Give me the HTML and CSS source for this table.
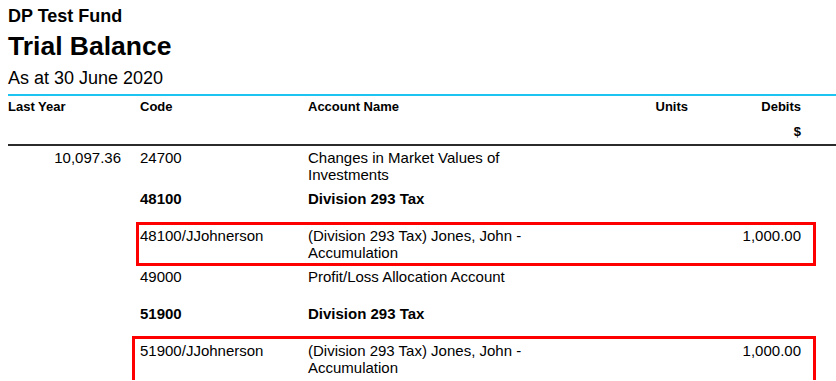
FILE: index.html
```html
<!DOCTYPE html>
<html lang="en">
<head>
    <meta charset="UTF-8">
    <meta name="viewport" content="width=device-width, initial-scale=1.0">
    <title>Trial Balance</title>
    <link rel="stylesheet" href="styles.css">
</head>
<body>
    <div class="report">
        <div class="fund">DP Test Fund</div>
        <div class="title">Trial Balance</div>
        <div class="subtitle">As at 30 June 2020</div>

        <div class="head">
            <div class="row head-row">
                <div>Last Year</div>
                <div>Code</div>
                <div>Account Name</div>
                <div class="num">Units</div>
                <div class="num">Debits</div>
            </div>
            <div class="row head-row currency">
                <div></div>
                <div></div>
                <div></div>
                <div></div>
                <div class="num">$</div>
            </div>
        </div>

        <div class="body">
            <div class="row line">
                <div class="num last-year">10,097.36</div>
                <div>24700</div>
                <div class="name">Changes in Market Values of Investments</div>
                <div></div>
                <div></div>
            </div>
            <div class="row line total">
                <div></div>
                <div>48100</div>
                <div class="name">Division 293 Tax</div>
                <div></div>
                <div></div>
            </div>
            <div class="row line">
                <div></div>
                <div>48100/JJohnerson</div>
                <div class="name">(Division 293 Tax) Jones, John - Accumulation</div>
                <div></div>
                <div class="num">1,000.00</div>
                <span class="highlight"></span>
            </div>
            <div class="row line">
                <div></div>
                <div>49000</div>
                <div class="name">Profit/Loss Allocation Account</div>
                <div></div>
                <div></div>
            </div>
            <div class="row line total">
                <div></div>
                <div>51900</div>
                <div class="name">Division 293 Tax</div>
                <div></div>
                <div></div>
            </div>
            <div class="row line">
                <div></div>
                <div>51900/JJohnerson</div>
                <div class="name">(Division 293 Tax) Jones, John - Accumulation</div>
                <div></div>
                <div class="num">1,000.00</div>
                <span class="highlight highlight-alt"></span>
            </div>
        </div>
    </div>
</body>
</html>
```

FILE: styles.css
```css
body {
    margin: 0;
    font-family: "Liberation Sans", Arial, sans-serif;
    color: #000;
    background: #fff;
    overflow: hidden;
}
.report {
    margin-left: 8px;
    padding-top: 6px;
}
.fund {
    font-size: 18px;
    font-weight: bold;
    line-height: 20px;
}
.title {
    font-size: 26.5px;
    font-weight: bold;
    line-height: 30px;
    margin-top: 5px;
}
.subtitle {
    font-size: 18px;
    line-height: 20px;
    margin-top: 7px;
}
.head {
    margin-top: 6px;
    border-top: 2px solid #1cc4f2;
    border-bottom: 2px solid #2b2b2b;
    padding: 3px 0 4px;
}
.row {
    display: grid;
    grid-template-columns: 132px 168px 240px 140px 113px;
}
.head-row {
    font-size: 13px;
    font-weight: bold;
    line-height: 16px;
}
.currency {
    margin-top: 9px;
}
.num {
    text-align: right;
}
.line {
    position: relative;
    font-size: 15px;
    line-height: 17px;
    padding: 3px 0 4px;
    min-height: 37px;
    box-sizing: border-box;
}
.last-year {
    padding-right: 19px;
}
.name {
    padding-right: 10px;
}
.total {
    font-weight: bold;
}
.highlight {
    position: absolute;
    left: 128px;
    right: 20px;
    top: -2px;
    bottom: -1px;
    border: 3px solid #f00;
}
.highlight-alt {
    left: 124px;
    top: -3px;
    bottom: -4px;
}
```
